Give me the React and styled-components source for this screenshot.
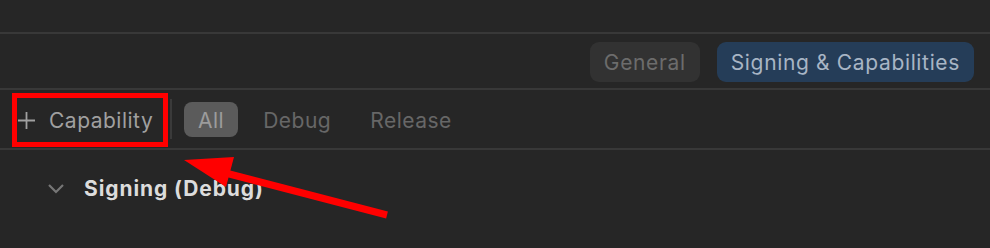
import styled, { createGlobalStyle } from "styled-components";

const Global = createGlobalStyle`
  html, body {
    margin: 0;
    padding: 0;
    background: #262626;
  }
  body {
    font-family: Inter, "Noto Sans", sans-serif;
    -webkit-font-smoothing: antialiased;
  }
`;

const Page = styled.div`
  position: relative;
  width: 990px;
  height: 248px;
  background: #262626;
  overflow: hidden;
`;

const TopSpace = styled.div`
  height: 32px;
  border-bottom: 2px solid #383838;
`;

const TabBar = styled.div`
  height: 52px;
  padding-top: 2px;
  display: flex;
  align-items: center;
  justify-content: flex-end;
  gap: 17px;
  padding-right: 16px;
  border-bottom: 2px solid #383838;
`;

const Tab = styled.div`
  height: 40px;
  display: flex;
  align-items: center;
  padding: 0 14px;
  border-radius: 9px;
  font-size: 21px;
  letter-spacing: 0.65px;
  background: ${(p) => (p.active ? "#253d58" : "#323232")};
  color: ${(p) => (p.active ? "#a8b5c5" : "#6c6c6c")};
`;

const Toolbar = styled.div`
  height: 58px;
  display: flex;
  align-items: center;
  padding-left: 18px;
  border-bottom: 2px solid #383838;
`;

const AddButton = styled.div`
  display: flex;
  align-items: center;
  gap: 14px;
  font-size: 21px;
  letter-spacing: 0.5px;
  color: #a0a0a0;
  width: 152px;
  padding-top: 2px;
`;

const Divider = styled.div`
  width: 2px;
  height: 40px;
  background: #3a3a3a;
  margin-right: 12px;
`;

const Filter = styled.div`
  height: 35px;
  display: flex;
  align-items: center;
  padding: 2px 14px 0;
  box-sizing: border-box;
  margin-right: 11px;
  border-radius: 8px;
  font-size: 21px;
  letter-spacing: 0.5px;
  background: ${(p) => (p.active ? "#5b5b5b" : "transparent")};
  color: ${(p) => (p.active ? "#9c9c9c" : "#676767")};
`;

const Section = styled.div`
  display: flex;
  align-items: center;
  gap: 20px;
  padding: 26px 0 0 48px;
`;

const SectionTitle = styled.div`
  font-size: 21px;
  font-weight: 700;
  letter-spacing: 0.9px;
  color: #dcdcdc;
`;

const Highlight = styled.div`
  position: absolute;
  left: 12px;
  top: 93px;
  width: 146px;
  height: 44px;
  border: 5px solid #ff0000;
`;

const Overlay = styled.svg`
  position: absolute;
  left: 0;
  top: 0;
  pointer-events: none;
`;

export default function App() {
  return (
    <Page>
      <Global />
      <TopSpace />
      <TabBar>
        <Tab>General</Tab>
        <Tab active>Signing &amp; Capabilities</Tab>
      </TabBar>
      <Toolbar>
        <AddButton>
          <svg width="17" height="17" viewBox="0 0 17 17">
            <path d="M8.5 0v17M0 8.5h17" stroke="#a0a0a0" strokeWidth="1.8" />
          </svg>
          Capability
        </AddButton>
        <Divider />
        <Filter active>All</Filter>
        <Filter>Debug</Filter>
        <Filter>Release</Filter>
      </Toolbar>
      <Section>
        <svg width="16" height="10" viewBox="0 0 16 10">
          <path d="M1 1l7 7 7-7" fill="none" stroke="#767676" strokeWidth="2.2" />
        </svg>
        <SectionTitle>Signing (Debug)</SectionTitle>
      </Section>
      <Highlight />
      <Overlay width="990" height="248">
        <path d="M214 170L387 215" stroke="#ff0000" strokeWidth="7" />
        <polygon points="184,160 234,157 226,187" fill="#ff0000" />
      </Overlay>
    </Page>
  );
}
